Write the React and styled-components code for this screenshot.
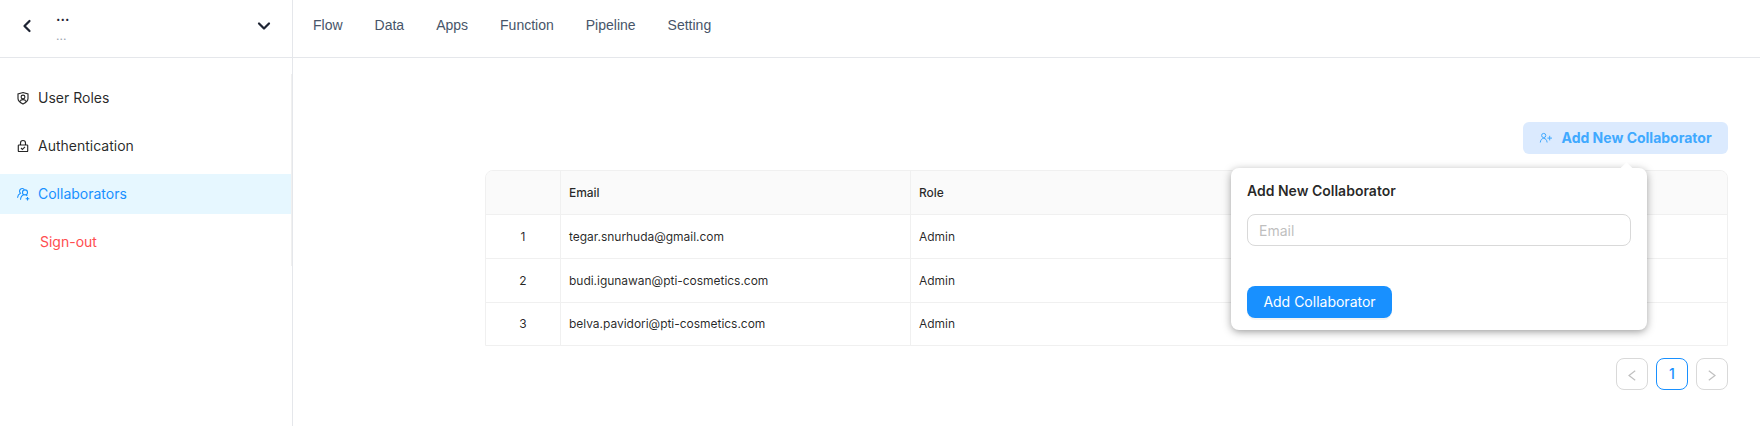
import React from "react";
import styled, { createGlobalStyle, css } from "styled-components";
import { FiChevronLeft, FiChevronDown } from "react-icons/fi";

const GlobalStyle = createGlobalStyle`
  *, *::before, *::after { box-sizing: border-box; }
  body {
    margin: 0;
    background: #fff;
    color: rgba(0, 0, 0, 0.85);
    font-family: Inter, "Liberation Sans", sans-serif;
    font-size: 14px;
    line-height: 22px;
  }
  button, input { font: inherit; margin: 0; }
`;

const Page = styled.div`
  display: flex;
  height: 426px;
  overflow: hidden;
`;

const Sidebar = styled.aside`
  flex: none;
  width: 293px;
  border-right: 1px solid #e5e7eb;
`;

const ProjectHeader = styled.div`
  display: flex;
  align-items: center;
  height: 58px;
  padding: 0 18px 6px 17px;
  border-bottom: 1px solid #e5e7eb;
  color: #1e2433;

  svg { flex: none; stroke-width: 2.700; }
`;

const ProjectNames = styled.div`
  flex: 1;
  margin-left: 19px;
  padding-bottom: 1px;
`;

const ProjectName = styled.div`
  font-size: 14px;
  font-weight: 600;
  line-height: 20px;
`;

const ProjectCaption = styled.div`
  margin-top: 2px;
  font-size: 12px;
  line-height: 16px;
  color: #9ca3af;
`;

const Menu = styled.nav`
  margin-top: 16px;
  padding: 4px 0;
  display: flex;
  flex-direction: column;
  gap: 8px;
  border-right: 1px solid #f0f0f0;
`;

const MenuItem = styled.a`
  display: flex;
  align-items: center;
  height: 40px;
  padding-left: ${(p) => (p.$danger ? 40 : 16)}px;
  color: ${(p) => (p.$danger ? "#ff4d4f" : "rgba(0, 0, 0, 0.85)")};
  ${(p) => p.$active && css`
    background: #e6f7ff;
    color: #1890ff;
  `}

  svg { margin-right: 8px; }
`;

const Main = styled.main`
  flex: 1;
  min-width: 0;
`;

const TopNav = styled.nav`
  display: flex;
  gap: 32px;
  height: 58px;
  padding: 14px 20px 0;
  border-bottom: 1px solid #e5e7eb;
  color: #475569;
  font-family: "Liberation Sans", Arial, sans-serif;
`;

const Content = styled.section`
  display: flex;
  flex-direction: column;
  align-items: flex-end;
  padding: 64px 32px 0 192px;
`;

const PopoverAnchor = styled.div`
  position: relative;
`;

const AddButton = styled.button`
  display: flex;
  align-items: center;
  width: 205px;
  height: 32px;
  padding: 0 16px;
  border: 0;
  border-radius: 6px;
  background: #dbeafe;
  color: #40a9ff;
  font-weight: 700;
  white-space: nowrap;

  svg { margin-right: 8.500px; }
`;

const Popover = styled.div`
  position: absolute;
  z-index: 1;
  top: 46px;
  right: 81px;
  width: 416px;
  height: 162px;
  padding: 12px 16px;
  border-radius: 8px;
  background: #fff;
  box-shadow: 0 3px 6px -4px rgba(0, 0, 0, 0.12), 0 2px 8px rgba(0, 0, 0, 0.35);

  &::before {
    content: "";
    position: absolute;
    top: -4px;
    right: 16px;
    width: 9px;
    height: 9px;
    background: #fff;
    transform: rotate(45deg);
  }
`;

const PopoverTitle = styled.div`
  font-weight: 600;
`;

const EmailInput = styled.input`
  display: block;
  width: 100%;
  height: 32px;
  margin: 12px 0 40px;
  padding: 4px 11px;
  border: 1px solid #d9d9d9;
  border-radius: 8px;
  outline: 0;

  &::placeholder { color: #bfbfbf; }
`;

const PrimaryButton = styled.button`
  width: 145px;
  height: 32px;
  padding: 0;
  border: 0;
  border-radius: 8px;
  background: #1890ff;
  color: #fff;
  box-shadow: 0 2px 0 rgba(0, 0, 0, 0.045);
`;

const Table = styled.div`
  width: 100%;
  margin-top: 16px;
  border: 1px solid #f0f0f0;
  border-radius: 8px 8px 0 0;
  overflow: hidden;
  font-size: 12px;
  letter-spacing: -0.03px;
`;

const Row = styled.div`
  display: grid;
  grid-template-columns: 75px 350px 1fr;
  height: ${(p) => (p.$last ? 42 : 44)}px;
  border-bottom: ${(p) => (p.$last ? 0 : 1)}px solid #f0f0f0;
  ${(p) => p.$head && css`
    background: #fafafa;
    font-weight: 500;
  `}
`;

const Cell = styled.div`
  display: flex;
  align-items: center;
  justify-content: ${(p) => (p.$center ? "center" : "flex-start")};
  padding: 0 8px;
  border-right: 1px solid #f0f0f0;

  &:last-child { border-right: 0; }
`;

const Pagination = styled.div`
  display: flex;
  gap: 8px;
  margin-top: 12px;
`;

const PageButton = styled.button`
  display: flex;
  align-items: center;
  justify-content: center;
  width: 32px;
  height: 32px;
  padding: 0;
  border: 1px solid ${(p) => (p.$current ? "#1890ff" : "#d9d9d9")};
  border-radius: 8px;
  background: #fff;
  color: ${(p) => (p.$current ? "#1890ff" : "rgba(0, 0, 0, 0.25)")};
  font-weight: 500;

  svg { margin-top: 2px; }
`;

const ShieldUserIcon = () => (
  <svg width="14" height="14" viewBox="0 0 14 14" fill="none" stroke="currentColor" strokeWidth="1.15">
    <path d="M7 1.500 12 3v4.500c0 2.600-2 4-5 5.500-3-1.500-5-2.900-5-5.500V3z" />
    <circle cx="7" cy="6" r="1.900" />
    <path d="M4.200 10.500c.5-2.500 5.100-2.500 5.600 0" />
  </svg>
);

const LockCheckIcon = () => (
  <svg width="14" height="14" viewBox="0 0 14 14" fill="none" stroke="currentColor" strokeWidth="1.15">
    <rect x="2.300" y="6" width="9.400" height="6.500" rx=".6" />
    <path d="M4.500 6V4a2.500 2.500 0 0 1 5 0v2M5 9l1.400 1.400 2.600-2.600" />
  </svg>
);

const GroupAddIcon = () => (
  <svg width="14" height="14" viewBox="0 0 14 14" fill="none" stroke="currentColor" strokeWidth="1.100">
    <path d="M8.400 2.600A2.700 2.700 0 1 0 4.400 6.200C2.600 7 1.700 8.600 1.500 10.700" />
    <circle cx="9" cy="5.400" r="2.500" />
    <path d="M4.500 12.800c.2-2.500 1.500-4.500 3.300-5M10 7.800l1.300 1.100M11.500 9.900v3.600M9.700 11.700h3.600" />
  </svg>
);

const UserAddIcon = () => (
  <svg width="14" height="14" viewBox="0 0 14 14" fill="none" stroke="currentColor" strokeWidth="1">
    <circle cx="4.700" cy="4.500" r="2.100" />
    <path d="M1.300 11.500c.2-2.600 1.500-4.100 3.400-4.100s3.200 1.500 3.400 4.100M10.700 4.800v4.600M8.400 7.100H13" />
  </svg>
);

const PageArrow = ({ next }) => (
  <svg width="8" height="11" viewBox="0 0 8 11" fill="none" stroke="currentColor" strokeWidth="1.200">
    <path d={next ? "M.8.7 7 5.500.8 10.300" : "M7.200.7 1 5.500l6.200 4.800"} />
  </svg>
);

const links = ["Flow", "Data", "Apps", "Function", "Pipeline", "Setting"];
const collaborators = [
  { email: "tegar.snurhuda@gmail.com", role: "Admin" },
  { email: "budi.igunawan@pti-cosmetics.com", role: "Admin" },
  { email: "belva.pavidori@pti-cosmetics.com", role: "Admin" },
];

export default function App() {
  return (
    <Page>
      <GlobalStyle />
      <Sidebar>
        <ProjectHeader>
          <FiChevronLeft size={20} />
          <ProjectNames>
            <ProjectName>...</ProjectName>
            <ProjectCaption>...</ProjectCaption>
          </ProjectNames>
          <FiChevronDown size={20} />
        </ProjectHeader>
        <Menu>
          <MenuItem><ShieldUserIcon />User Roles</MenuItem>
          <MenuItem><LockCheckIcon />Authentication</MenuItem>
          <MenuItem $active><GroupAddIcon />Collaborators</MenuItem>
          <MenuItem $danger>Sign-out</MenuItem>
        </Menu>
      </Sidebar>
      <Main>
        <TopNav>
          {links.map((label) => <span key={label}>{label}</span>)}
        </TopNav>
        <Content>
          <PopoverAnchor>
            <AddButton><UserAddIcon />Add New Collaborator</AddButton>
            <Popover>
              <PopoverTitle>Add New Collaborator</PopoverTitle>
              <EmailInput placeholder="Email" />
              <PrimaryButton>Add Collaborator</PrimaryButton>
            </Popover>
          </PopoverAnchor>
          <Table>
            <Row $head>
              <Cell />
              <Cell>Email</Cell>
              <Cell>Role</Cell>
            </Row>
            {collaborators.map((c, i) => (
              <Row key={c.email} $last={i === collaborators.length - 1}>
                <Cell $center>{i + 1}</Cell>
                <Cell>{c.email}</Cell>
                <Cell>{c.role}</Cell>
              </Row>
            ))}
          </Table>
          <Pagination>
            <PageButton><PageArrow /></PageButton>
            <PageButton $current>1</PageButton>
            <PageButton><PageArrow next /></PageButton>
          </Pagination>
        </Content>
      </Main>
    </Page>
  );
}
